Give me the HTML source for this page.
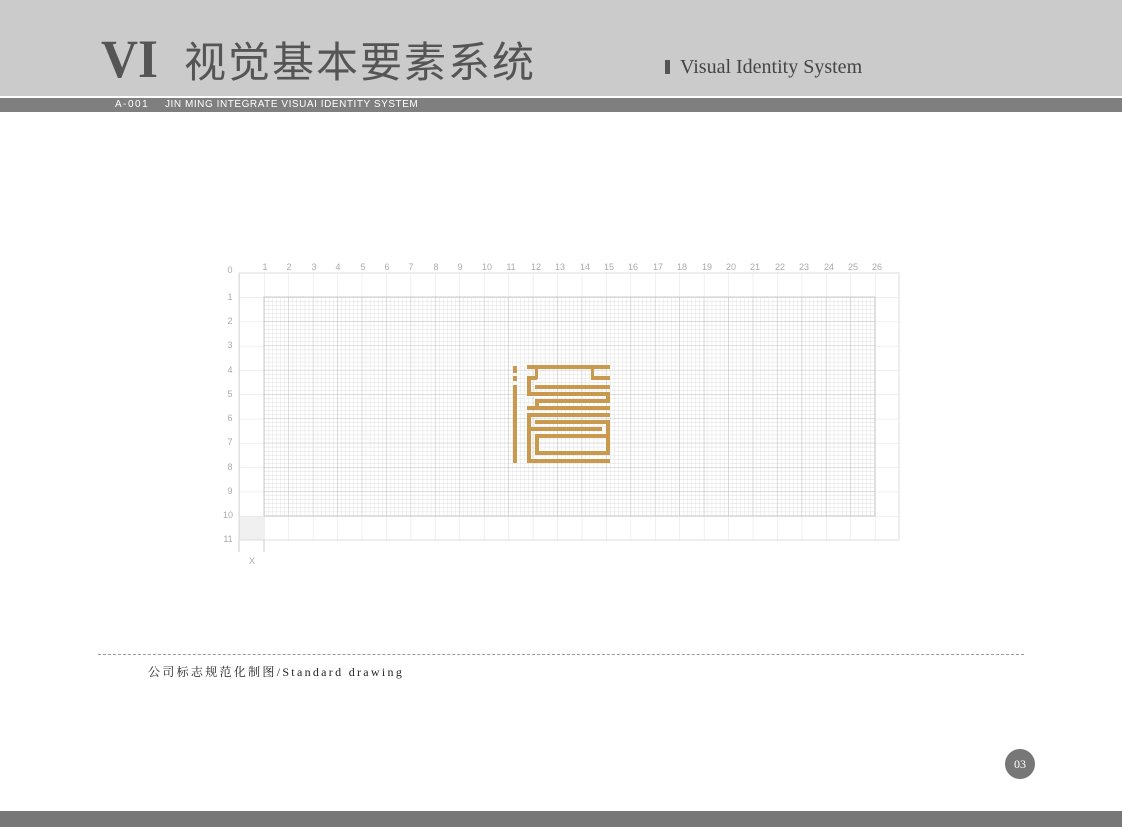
<!DOCTYPE html>
<html><head><meta charset="utf-8"><style>
body{margin:0;width:1122px;height:827px;background:#fff;position:relative;overflow:hidden;font-family:"Liberation Sans","Noto Sans CJK SC",sans-serif}
.hd{position:absolute;left:0;top:0;width:1122px;height:96px;background:#cbcbcb}
.bar{position:absolute;left:0;top:98px;width:1122px;height:14px;background:#7f7f7f;color:#fff;font-size:10px;line-height:14px}
.vi{position:absolute;left:101px;top:28px;font:bold 54px "Liberation Serif",serif;color:#555;transform:scaleX(0.95);transform-origin:left}
.cn{position:absolute;left:184px;top:35px;font:42px "Noto Sans CJK SC",sans-serif;color:#555;letter-spacing:2px;line-height:50px}
.en{position:absolute;left:680px;top:56px;font:20px "Liberation Serif",serif;color:#444}
.en:before{content:"";position:absolute;left:-15px;top:4px;width:5px;height:14px;background:#555}
.dash{position:absolute;left:98px;top:654px;width:926px;border-top:1px dashed #999}
.cap{position:absolute;left:148px;top:663px;font:12px "Liberation Serif","Noto Serif CJK SC",serif;color:#222;letter-spacing:2.3px}
.pg{position:absolute;left:1005px;top:749px;width:30px;height:30px;border-radius:50%;background:#777;color:#fff;font:12px "Liberation Serif",serif;text-align:center;line-height:30px}
.foot{position:absolute;left:0;top:811px;width:1122px;height:16px;background:#777}
</style></head><body>
<div class="hd"></div>
<div class="vi">VI</div>
<div class="cn">视觉基本要素系统</div>
<div class="en">Visual Identity System</div>
<div class="bar"><span style="position:absolute;left:115px;letter-spacing:1.5px">A-001</span><span style="position:absolute;left:165px;font-size:10px;letter-spacing:0.55px">JIN MING INTEGRATE VISUAI IDENTITY SYSTEM</span></div>
<svg style="position:absolute;left:0;top:0" width="1122" height="827">
<defs>
<pattern id="f" x="264" y="297" width="4.07" height="4.05" patternUnits="userSpaceOnUse">
<path d="M0 0H4.07M0 0V4.05" stroke="#dcdcdc" stroke-width="0.8" fill="none"/></pattern>
<pattern id="m" x="264" y="297" width="24.44" height="24.3" patternUnits="userSpaceOnUse">
<path d="M0 0H24.44M0 0V24.3" stroke="#bdbdbd" stroke-width="0.8" fill="none"/></pattern>
<pattern id="o" x="264" y="273" width="24.44" height="24.3" patternUnits="userSpaceOnUse">
<path d="M0 0H24.44M0 0V24.3" stroke="#e2e2e2" stroke-width="1" fill="none"/></pattern>
</defs>
<rect x="239" y="516" width="25" height="24" fill="#f0f0f0"/>
<rect x="239" y="273" width="660" height="267" fill="url(#o)" stroke="#ddd"/>
<rect x="264" y="297" width="611" height="219" fill="#fff"/>
<rect x="264" y="297" width="611" height="219" fill="url(#f)"/>
<rect x="264" y="297" width="611" height="219" fill="url(#m)" stroke="#bbb" stroke-width="0.8"/>
<path d="M264 540V552H264M239 540V552" stroke="#ccc"/>
<g font-size="9" fill="#aaa" font-family="Liberation Sans" text-anchor="middle">
<text x="230" y="273">0</text><text x="230" y="300">1</text><text x="230" y="324">2</text><text x="230" y="348">3</text><text x="230" y="373">4</text><text x="230" y="397">5</text><text x="230" y="421">6</text><text x="230" y="445">7</text><text x="230" y="470">8</text><text x="230" y="494">9</text><text x="228" y="518">10</text><text x="228" y="542">11</text>
<text x="252" y="564">X</text>
<text x="265" y="270">1</text><text x="289" y="270">2</text><text x="314" y="270">3</text><text x="338" y="270">4</text><text x="363" y="270">5</text><text x="387" y="270">6</text><text x="411" y="270">7</text><text x="436" y="270">8</text><text x="460" y="270">9</text><text x="487" y="270">10</text><text x="511" y="270">11</text><text x="536" y="270">12</text><text x="560" y="270">13</text><text x="585" y="270">14</text><text x="609" y="270">15</text><text x="633" y="270">16</text><text x="658" y="270">17</text><text x="682" y="270">18</text><text x="707" y="270">19</text><text x="731" y="270">20</text><text x="755" y="270">21</text><text x="780" y="270">22</text><text x="804" y="270">23</text><text x="829" y="270">24</text><text x="853" y="270">25</text><text x="877" y="270">26</text>
</g>
<g fill="#c99a4e">
<rect x="513" y="366" width="4" height="7"/><rect x="513" y="376" width="4" height="5"/><rect x="513" y="385" width="4" height="78"/>
<rect x="527" y="365" width="83" height="4"/>
<rect x="535" y="369" width="3" height="10"/><rect x="591" y="369" width="3" height="10"/>
<rect x="527" y="376" width="10" height="4"/><rect x="591" y="376" width="19" height="4"/>
<rect x="527" y="380" width="4" height="12"/>
<rect x="535" y="385" width="75" height="4"/>
<rect x="527" y="392" width="80" height="4"/><rect x="606" y="392" width="4" height="11"/>
<rect x="535" y="399" width="75" height="4"/><rect x="535" y="403" width="4" height="3"/>
<rect x="527" y="406" width="83" height="4"/>
<rect x="527" y="413" width="83" height="4"/>
<rect x="527" y="417" width="4" height="10"/>
<rect x="535" y="420" width="75" height="4"/><rect x="606" y="424" width="4" height="10"/>
<rect x="527" y="427" width="75" height="4"/>
<rect x="527" y="431" width="4" height="32"/>
<rect x="535" y="434" width="75" height="4"/><rect x="535" y="438" width="4" height="17"/><rect x="606" y="438" width="4" height="17"/>
<rect x="535" y="451" width="75" height="4"/>
<rect x="527" y="459" width="83" height="4"/>
</g>
</svg>
<div class="dash"></div>
<div class="cap">公司标志规范化制图/Standard drawing</div>
<div class="pg">03</div>
<div class="foot"></div>
</body></html>
